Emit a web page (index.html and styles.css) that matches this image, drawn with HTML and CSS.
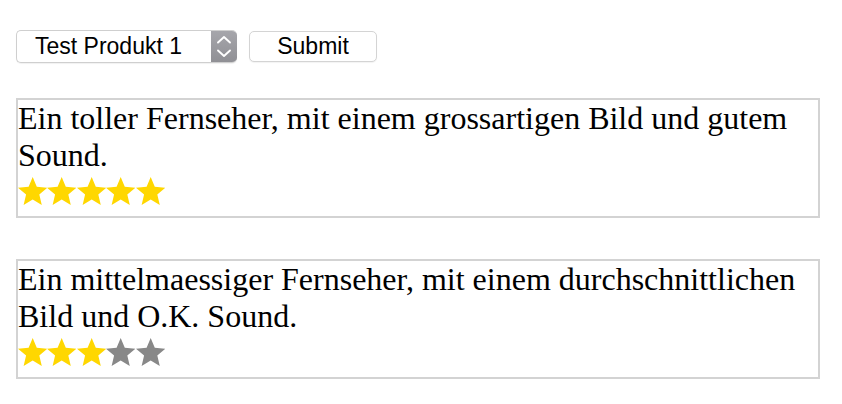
FILE: index.html
```html
<!DOCTYPE html>
<html lang="de">
<head>
<meta charset="utf-8">
<title>Bewertungen</title>
<link rel="stylesheet" href="styles.css">
</head>
<body>
<svg class="defs" width="0" height="0" aria-hidden="true">
  <symbol id="star" viewBox="-47.55 -50 95.1 90.45">
    <polygon points="0,-50 13.23,-18.2 47.55,-15.45 21.4,6.95 29.39,40.45 0,22.5 -29.39,40.45 -21.4,6.95 -47.55,-15.45 -13.23,-18.2"/>
  </symbol>
</svg>
<form class="controls">
  <div class="select">
    <span class="select-label">Test Produkt 1</span>
    <span class="stepper">
      <svg width="26" height="31" viewBox="0 0 26 31"><path d="M7 11.5 L13 6 L19 11.5 M7 19.5 L13 25 L19 19.5" fill="none" stroke="#fff" stroke-width="1.9" stroke-linecap="round" stroke-linejoin="round"/></svg>
    </span>
  </div>
  <button type="button" class="btn">Submit</button>
</form>

<div class="review">
  <div class="review-text">Ein toller Fernseher, mit einem grossartigen Bild und gutem Sound.</div>
  <div class="stars">
    <svg class="star on"><use href="#star"/></svg><svg class="star on"><use href="#star"/></svg><svg class="star on"><use href="#star"/></svg><svg class="star on"><use href="#star"/></svg><svg class="star on"><use href="#star"/></svg>
  </div>
</div>

<div class="review">
  <div class="review-text">Ein mittelmaessiger Fernseher, mit einem durchschnittlichen Bild und O.K. Sound.</div>
  <div class="stars">
    <svg class="star on"><use href="#star"/></svg><svg class="star on"><use href="#star"/></svg><svg class="star on"><use href="#star"/></svg><svg class="star off"><use href="#star"/></svg><svg class="star off"><use href="#star"/></svg>
  </div>
</div>
</body>
</html>
```

FILE: styles.css
```css
html, body {
  margin: 0;
  background: #fff;
}
body {
  padding: 30px 0 0 16px;
  font-family: "Liberation Serif", "Times New Roman", serif;
  color: #000;
}
.defs {
  position: absolute;
  width: 0;
  height: 0;
  overflow: hidden;
}
.controls {
  display: flex;
  align-items: center;
  gap: 12px;
  height: 33px;
}
.select {
  box-sizing: border-box;
  width: 221px;
  height: 33px;
  display: flex;
  align-items: stretch;
  border: 1px solid #cfcfcf;
  border-right: 0;
  border-radius: 5px;
  overflow: hidden;
  background: #fff;
  box-shadow: 0 1px 1px rgba(0,0,0,0.06);
}
.select-label {
  flex: 1;
  display: flex;
  align-items: center;
  padding-left: 18px;
  font-family: "Liberation Sans", Arial, sans-serif;
  font-size: 23px;
}
.stepper {
  width: 26px;
  display: flex;
  align-items: center;
  justify-content: center;
  background: linear-gradient(#a6a6ab, #909095);
}
.btn {
  box-sizing: border-box;
  width: 128px;
  height: 31px;
  padding: 0;
  border: 1px solid #d4d4d4;
  border-radius: 5px;
  background: #fff;
  font-family: "Liberation Sans", Arial, sans-serif;
  font-size: 23px;
  color: #000;
  box-shadow: 0 1px 1px rgba(0,0,0,0.05);
}
.review {
  box-sizing: border-box;
  width: 804px;
  margin-top: 35px;
  border: 2px solid #d3d3d3;
}
.review + .review {
  margin-top: 41px;
}
.review-text {
  font-size: 32px;
  line-height: 37px;
}
.stars {
  display: flex;
  height: 42px;
  padding-top: 3px;
  box-sizing: border-box;
}
.star {
  width: 29.4px;
  height: 28px;
  display: block;
}
.star.on { fill: #ffd700; }
.star.off { fill: #888888; }
```
